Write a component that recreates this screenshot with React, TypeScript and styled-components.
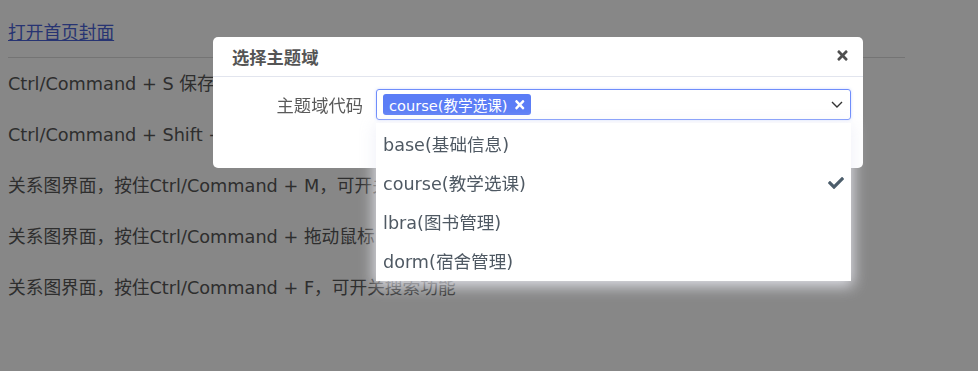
import styled, { createGlobalStyle } from "styled-components";
import { FaTimes, FaCheck } from "react-icons/fa";

const GlobalStyle = createGlobalStyle`
  body {
    margin: 0;
    background: #ffffff;
    font-family: "DejaVu Sans", "Noto Sans CJK SC", sans-serif;
  }
`;

const tips = [
  "Ctrl/Command + S 保存当前的修改",
  "Ctrl/Command + Shift + S 另存为新的版本",
  "关系图界面，按住Ctrl/Command + M，可开关缩略图",
  "关系图界面，按住Ctrl/Command + 拖动鼠标，可框选多个表",
  "关系图界面，按住Ctrl/Command + F，可开关搜索功能",
];

const options = [
  { code: "base", name: "基础信息" },
  { code: "course", name: "教学选课" },
  { code: "lbra", name: "图书管理" },
  { code: "dorm", name: "宿舍管理" },
];

function App() {
  const selected = "course";
  return (
    <>
      <GlobalStyle />
      <Page>
        <Header>
          <CoverLink href="#">打开首页封面</CoverLink>
        </Header>
        {tips.map((t) => (
          <Tip key={t}>{t}</Tip>
        ))}
      </Page>
      <Mask />
      <Modal>
        <ModalHeader>
          <ModalTitle>选择主题域</ModalTitle>
          <CloseBtn>
            <FaTimes />
          </CloseBtn>
        </ModalHeader>
        <ModalBody>
          <FormRow>
            <Label>主题域代码</Label>
            <SelectWrap>
              <SelectBox>
                <Tag>
                  course(教学选课)
                  <FaTimes />
                </Tag>
                <Chevron viewBox="0 0 12 7" width="12" height="7">
                  <path d="M1 1 L6 6 L11 1" fill="none" stroke="#333" strokeWidth="1.4" />
                </Chevron>
              </SelectBox>
              <Dropdown>
                {options.map((o) => (
                  <Option key={o.code}>
                    {o.code}({o.name})
                    {o.code === selected && (
                      <Check>
                        <FaCheck />
                      </Check>
                    )}
                  </Option>
                ))}
              </Dropdown>
            </SelectWrap>
          </FormRow>
        </ModalBody>
      </Modal>
    </>
  );
}

const Page = styled.div`
  padding: 8px;
  width: 897px;
  font-size: 17.7px;
  color: #575757;
`;

const Header = styled.div`
  padding-top: 12px;
  height: 37px;
  line-height: 26px;
  border-bottom: 1px solid #dcdcdc;
`;

const CoverLink = styled.a`
  color: #4a63d8;
  text-decoration: underline;
`;

const Tip = styled.p`
  margin: 0;
  padding: 12.5px 0;
  line-height: 26px;
  white-space: nowrap;
`;

const Mask = styled.div`
  position: fixed;
  inset: 0;
  background: rgba(0, 0, 0, 0.47);
`;

const Modal = styled.div`
  position: absolute;
  left: 213px;
  top: 37px;
  width: 650px;
  height: 131px;
  background: #ffffff;
  border-radius: 5px;
`;

const ModalHeader = styled.div`
  display: flex;
  align-items: center;
  justify-content: space-between;
  height: 39px;
  padding: 0 13px 0 19px;
  border-bottom: 1px solid #e2e5ee;
`;

const ModalTitle = styled.div`
  font-size: 17.3px;
  font-weight: bold;
  color: #555555;
`;

const CloseBtn = styled.span`
  display: flex;
  color: #4f4f4f;
  font-size: 15px;
  margin-top: -3px;
`;

const ModalBody = styled.div`
  padding: 12px 12px 0 0;
`;

const FormRow = styled.div`
  display: flex;
  align-items: center;
  gap: 13px;
`;

const Label = styled.div`
  width: 150px;
  text-align: right;
  font-size: 17.3px;
  color: #5a5a5a;
`;

const SelectWrap = styled.div`
  position: relative;
  flex: 1;
`;

const SelectBox = styled.div`
  display: flex;
  align-items: center;
  justify-content: space-between;
  height: 31px;
  box-sizing: border-box;
  padding: 0 6px 0 6px;
  border: 1px solid #6f8dfb;
  border-radius: 3px;
  box-shadow: 0 0 3px rgba(111, 141, 251, 0.35);
`;

const Tag = styled.span`
  display: inline-flex;
  align-items: center;
  gap: 5px;
  height: 21px;
  padding: 0 5px 0 6px;
  background: #5b7df6;
  color: #ffffff;
  border-radius: 3px;
  font-size: 14.6px;
  svg {
    font-size: 13.5px;
  }
`;

const Chevron = styled.svg`
  margin-right: 1px;
`;

const Dropdown = styled.ul`
  position: absolute;
  left: 0;
  right: 0;
  top: 34px;
  margin: 0;
  padding: 1px 0;
  list-style: none;
  background: #ffffff;
  box-shadow: 0 3px 14px 2px rgba(238, 240, 248, 0.85);
`;

const Option = styled.li`
  display: flex;
  align-items: center;
  justify-content: space-between;
  height: 39px;
  padding: 0 7px 0 7px;
  font-size: 17.6px;
  color: #4f5963;
`;

const Check = styled.span`
  display: flex;
  color: #4c5d6b;
  font-size: 16px;
`;

export default App;
